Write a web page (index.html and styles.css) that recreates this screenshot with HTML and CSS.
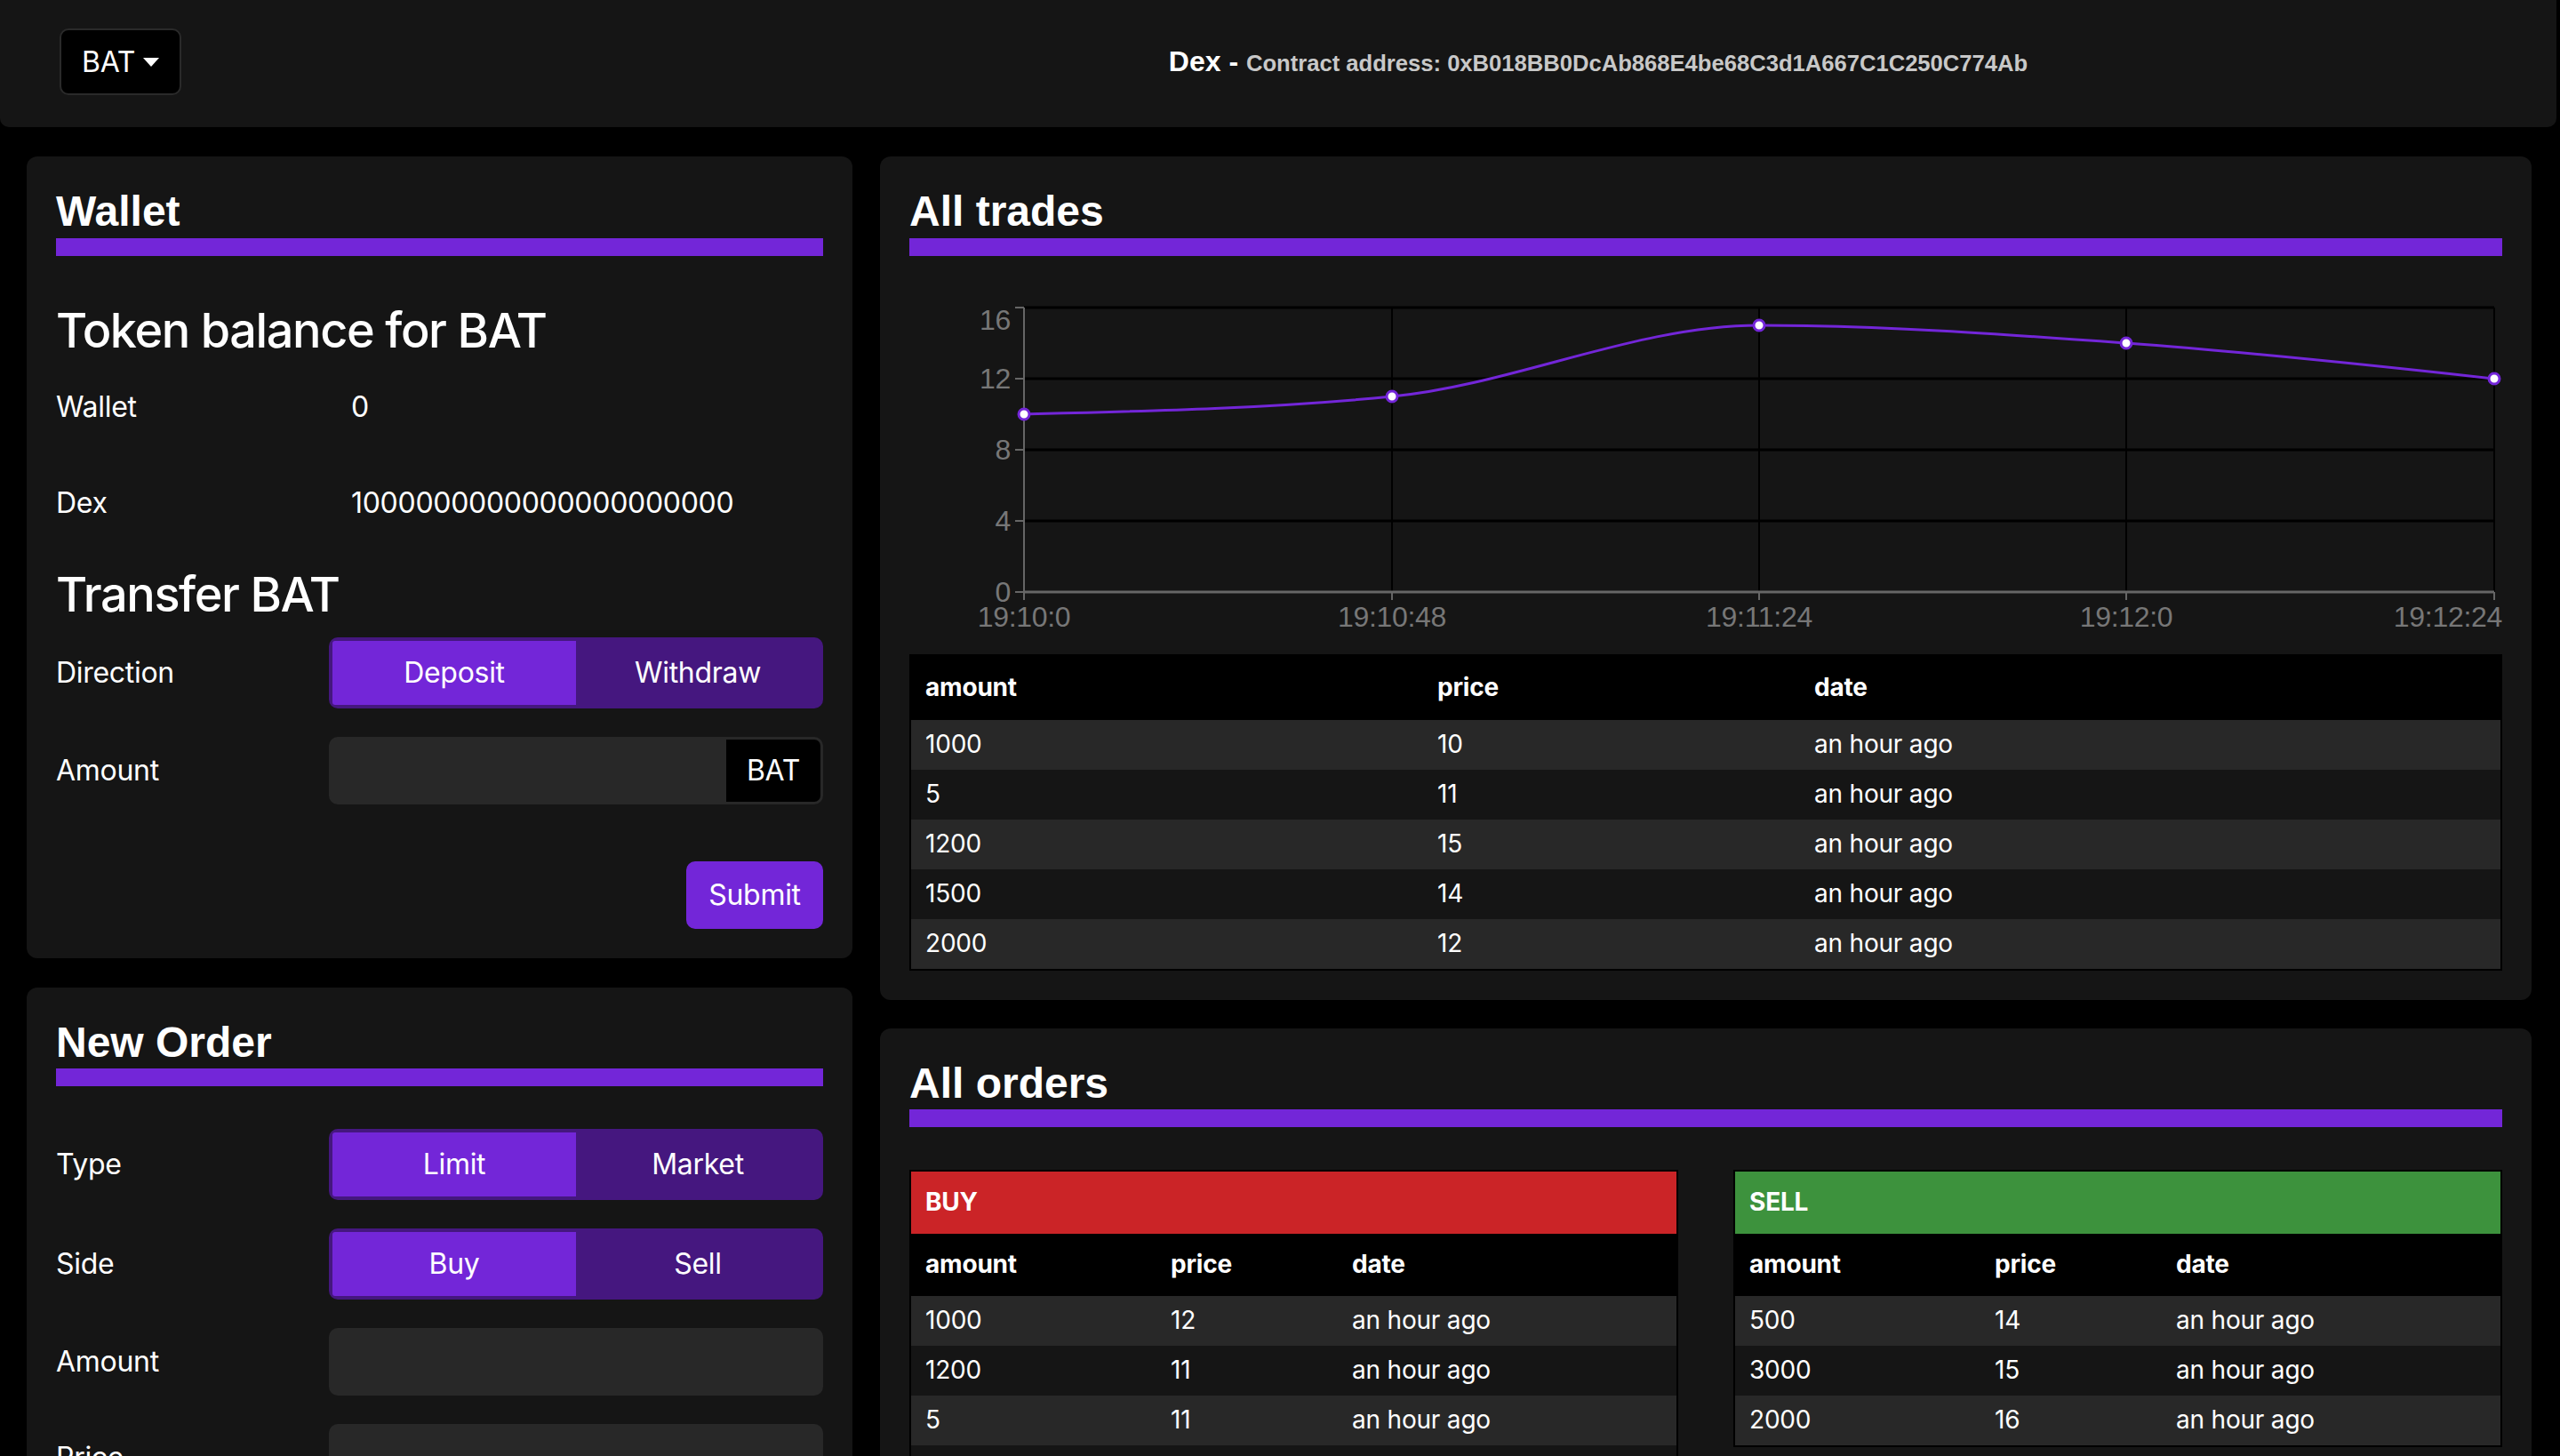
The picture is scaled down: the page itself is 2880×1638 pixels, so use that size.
FILE: index.html
```html
<!DOCTYPE html>
<html lang="en">
<head>
<meta charset="utf-8">
<title>Dex</title>
<link rel="stylesheet" href="styles.css">
</head>
<body>
<header class="topbar">
  <div class="topbar-left">
    <button class="token-select" type="button">BAT<span class="caret"></span></button>
  </div>
  <h1 class="dex-title">Dex - <small>Contract address: 0xB018BB0DcAb868E4be68C3d1A667C1C250C774Ab</small></h1>
</header>

<main class="layout">
  <div class="column">
    <section class="card">
      <h2 class="card-title">Wallet</h2>
      <div class="title-bar"></div>
      <h3 class="subhead first">Token balance for BAT</h3>
      <div class="balance-row"><span>Wallet</span><span>0</span></div>
      <div class="balance-row"><span>Dex</span><span>1000000000000000000000</span></div>
      <h3 class="subhead">Transfer BAT</h3>
      <div class="form-row">
        <label>Direction</label>
        <div class="toggle">
          <button class="toggle-btn active" type="button">Deposit</button>
          <button class="toggle-btn" type="button">Withdraw</button>
        </div>
      </div>
      <div class="form-row">
        <label>Amount</label>
        <div class="input-group">
          <input class="input" type="text">
          <span class="addon">BAT</span>
        </div>
      </div>
      <div class="submit-row"><button class="submit-btn" type="button">Submit</button></div>
    </section>

    <section class="card">
      <h2 class="card-title">New Order</h2>
      <div class="title-bar"></div>
      <div class="form-row">
        <label>Type</label>
        <div class="toggle">
          <button class="toggle-btn active" type="button">Limit</button>
          <button class="toggle-btn" type="button">Market</button>
        </div>
      </div>
      <div class="form-row">
        <label>Side</label>
        <div class="toggle">
          <button class="toggle-btn active" type="button">Buy</button>
          <button class="toggle-btn" type="button">Sell</button>
        </div>
      </div>
      <div class="form-row">
        <label>Amount</label>
        <div class="input-group"><input class="input" type="text"></div>
      </div>
      <div class="form-row">
        <label>Price</label>
        <div class="input-group"><input class="input" type="text"></div>
      </div>
    </section>
  </div>

  <div class="column column-right">
    <section class="card">
      <h2 class="card-title">All trades</h2>
      <div class="title-bar flush"></div>
      <svg class="chart" width="1792" height="448" viewBox="0 0 1792 448">
        <g stroke="#000" stroke-width="3">
          <line x1="129" y1="58" x2="1783" y2="58"/>
          <line x1="129" y1="138" x2="1783" y2="138"/>
          <line x1="129" y1="218" x2="1783" y2="218"/>
          <line x1="129" y1="298" x2="1783" y2="298"/>
        </g>
        <g stroke="#000" stroke-width="2">
          <line x1="543" y1="58" x2="543" y2="378"/>
          <line x1="956" y1="58" x2="956" y2="378"/>
          <line x1="1369" y1="58" x2="1369" y2="378"/>
          <line x1="1783" y1="58" x2="1783" y2="378"/>
        </g>
        <g stroke="#666" stroke-width="2">
          <line x1="129" y1="58" x2="129" y2="379"/>
          <line x1="119" y1="58" x2="129" y2="58"/>
          <line x1="119" y1="138" x2="129" y2="138"/>
          <line x1="119" y1="218" x2="129" y2="218"/>
          <line x1="119" y1="298" x2="129" y2="298"/>
          <line x1="119" y1="378" x2="129" y2="378"/>
          <line x1="129" y1="378" x2="129" y2="387"/>
          <line x1="543" y1="378" x2="543" y2="387"/>
          <line x1="956" y1="378" x2="956" y2="387"/>
          <line x1="1369" y1="378" x2="1369" y2="387"/>
          <line x1="1783" y1="378" x2="1783" y2="387"/>
        </g>
        <line x1="129" y1="378" x2="1783" y2="378" stroke="#666" stroke-width="3"/>
        <g class="axis-label" text-anchor="end">
          <text x="114" y="83">16</text>
          <text x="114" y="149">12</text>
          <text x="114" y="229">8</text>
          <text x="114" y="309">4</text>
          <text x="114" y="389">0</text>
        </g>
        <g class="axis-label" text-anchor="middle">
          <text x="129" y="417">19:10:0</text>
          <text x="543" y="417">19:10:48</text>
          <text x="956" y="417">19:11:24</text>
          <text x="1369" y="417">19:12:0</text>
        </g>
        <text class="axis-label" x="1792" y="417" text-anchor="end">19:12:24</text>
        <path d="M129,178 C266.8,174.6 405.2,171.6 543,158 C680.8,144.4 818.2,78 956,78 C1093.8,78 1231.2,88 1369,98 C1506.8,108 1645.2,122.7 1783,138" fill="none" stroke="#7326d8" stroke-width="3"/>
        <g fill="#fff" stroke="#7326d8" stroke-width="3">
          <circle cx="129" cy="178" r="6"/>
          <circle cx="543" cy="158" r="6"/>
          <circle cx="956" cy="78" r="6"/>
          <circle cx="1369" cy="98" r="6"/>
          <circle cx="1783" cy="138" r="6"/>
        </g>
      </svg>
      <table class="data-table trades-table">
        <thead>
          <tr class="cols"><th>amount</th><th>price</th><th>date</th></tr>
        </thead>
        <tbody>
          <tr><td>1000</td><td>10</td><td>an hour ago</td></tr>
          <tr><td>5</td><td>11</td><td>an hour ago</td></tr>
          <tr><td>1200</td><td>15</td><td>an hour ago</td></tr>
          <tr><td>1500</td><td>14</td><td>an hour ago</td></tr>
          <tr><td>2000</td><td>12</td><td>an hour ago</td></tr>
        </tbody>
      </table>
    </section>

    <section class="card">
      <h2 class="card-title">All orders</h2>
      <div class="title-bar"></div>
      <div class="orders-grid">
        <table class="data-table orders-table">
          <thead>
            <tr><th class="side-title buy" colspan="3">BUY</th></tr>
            <tr class="cols"><th>amount</th><th>price</th><th>date</th></tr>
          </thead>
          <tbody>
            <tr><td>1000</td><td>12</td><td>an hour ago</td></tr>
            <tr><td>1200</td><td>11</td><td>an hour ago</td></tr>
            <tr><td>5</td><td>11</td><td>an hour ago</td></tr>
            <tr><td>1500</td><td>10</td><td>an hour ago</td></tr>
          </tbody>
        </table>
        <table class="data-table orders-table">
          <thead>
            <tr><th class="side-title sell" colspan="3">SELL</th></tr>
            <tr class="cols"><th>amount</th><th>price</th><th>date</th></tr>
          </thead>
          <tbody>
            <tr><td>500</td><td>14</td><td>an hour ago</td></tr>
            <tr><td>3000</td><td>15</td><td>an hour ago</td></tr>
            <tr><td>2000</td><td>16</td><td>an hour ago</td></tr>
          </tbody>
        </table>
      </div>
    </section>
  </div>
</main>
</body>
</html>
```

FILE: styles.css
```css
* { box-sizing: border-box; }

html, body { margin: 0; padding: 0; }

body {
  background: #000;
  color: #fff;
  font-family: Inter, "Noto Sans", sans-serif;
  font-size: 32px;
  line-height: 1.5;
  letter-spacing: -0.3px;
  overflow: hidden;
}

/* ---------- top bar ---------- */
.topbar {
  height: 143px;
  padding-bottom: 4px;
  margin-right: 4px;
  background: #151515;
  border-radius: 0 0 10px 10px;
  display: grid;
  grid-template-columns: 720px 1fr;
  align-items: center;
}

.topbar-left { padding-left: 67px; }

.token-select {
  display: inline-flex;
  align-items: center;
  height: 75px;
  padding: 0 23px;
  background: #000;
  color: #fff;
  border: 2px solid #2a2a2a;
  border-radius: 10px;
  font: 400 32px/1 Inter, sans-serif;
  letter-spacing: -0.3px;
}

.caret {
  display: inline-block;
  margin-left: 9px;
  border-top: 10px solid #fff;
  border-left: 9.5px solid transparent;
  border-right: 9.5px solid transparent;
}

.dex-title {
  margin: 0;
  text-align: center;
  font: 700 32px/1.2 "Liberation Sans", Arial, sans-serif;
  letter-spacing: 0;
}

.dex-title small {
  font-size: 0.8em;
  color: #c8c8c8;
}

/* ---------- layout ---------- */
.layout {
  display: grid;
  grid-template-columns: 929px 1fr;
  gap: 31px;
  padding: 33px 33px 33px 30px;
  align-items: start;
}

.column {
  display: flex;
  flex-direction: column;
  gap: 33px;
}

.column-right { gap: 32px; }

.card {
  background: #151515;
  border-radius: 12px;
  padding: 33px;
  display: flex;
  flex-direction: column;
}

.card-title {
  margin: 0 0 1px;
  font: 700 48px/1.2 "Liberation Sans", Arial, sans-serif;
  letter-spacing: 0;
}

.title-bar {
  height: 20px;
  background: #7326d8;
  margin-bottom: 48px;
}

.title-bar.flush { margin-bottom: 0; }

.subhead {
  margin: 0 0 16px;
  font-size: 54px;
  font-weight: 500;
  line-height: 65px;
  letter-spacing: -1.4px;
}

.subhead.first { margin-top: 3px; }

/* ---------- rows ---------- */
.balance-row {
  display: grid;
  grid-template-columns: 332px 1fr;
  align-items: center;
  height: 76px;
  margin-bottom: 32px;
}

.form-row {
  display: grid;
  grid-template-columns: 307px 1fr;
  align-items: center;
  margin-bottom: 32px;
}

.toggle {
  display: flex;
  height: 80px;
  padding: 4px;
  background: #45177f;
  border-radius: 10px;
}

.toggle-btn {
  flex: 1;
  border: 0;
  background: transparent;
  color: #fff;
  font: 400 32px/1 Inter, sans-serif;
  letter-spacing: -0.3px;
  padding: 0;
}

.toggle-btn.active {
  background: #7326d8;
  border-radius: 3px 0 0 3px;
}

.input-group {
  display: flex;
  height: 76px;
  background: #282828;
  border-radius: 10px;
  overflow: hidden;
}

.input {
  flex: 1;
  min-width: 0;
  border: 0;
  background: transparent;
  color: #fff;
  font: inherit;
  padding: 0 24px;
  outline: none;
}

.addon {
  width: 106px;
  margin: 3px 3px 3px 0;
  background: #000;
  border-radius: 0 7px 7px 0;
  display: flex;
  align-items: center;
  justify-content: center;
}

.submit-row {
  display: flex;
  justify-content: flex-end;
  margin-top: 32px;
}

.submit-btn {
  width: 154px;
  height: 76px;
  border: 0;
  border-radius: 10px;
  background: #7326d8;
  color: #fff;
  font: 400 32px/1 Inter, sans-serif;
  letter-spacing: -0.3px;
}

/* ---------- chart ---------- */
.chart { display: block; }

.axis-label {
  fill: #777;
  font-family: "Liberation Sans", Arial, sans-serif;
  font-size: 32px;
}

/* ---------- tables ---------- */
.data-table {
  width: 100%;
  border-collapse: separate;
  border-spacing: 0;
  border: 2px solid #000;
  font-size: 28px;
  line-height: 1.2;
  letter-spacing: -0.2px;
}

.data-table th,
.data-table td {
  text-align: left;
  padding: 0 16px;
  vertical-align: middle;
}

.data-table .cols th {
  background: #000;
  height: 72px;
  font-weight: 700;
}

.data-table td { height: 56px; }

.data-table tbody tr:nth-child(odd) td { background: #282828; }
.data-table tbody tr:nth-child(even) td { background: #151515; }

.trades-table .cols th:nth-child(1) { width: 576px; }
.trades-table .cols th:nth-child(2) { width: 424px; }

.orders-grid {
  display: grid;
  grid-template-columns: 1fr 1fr;
  gap: 62px;
  align-items: start;
}

.orders-table .cols th { height: 70px; }
.orders-table .cols th:nth-child(1) { width: 276px; }
.orders-table .cols th:nth-child(2) { width: 204px; }

.side-title {
  height: 70px;
  font-weight: 700;
}

.side-title.buy { background: #cb2427; }
.side-title.sell { background: #3d923d; }
```
